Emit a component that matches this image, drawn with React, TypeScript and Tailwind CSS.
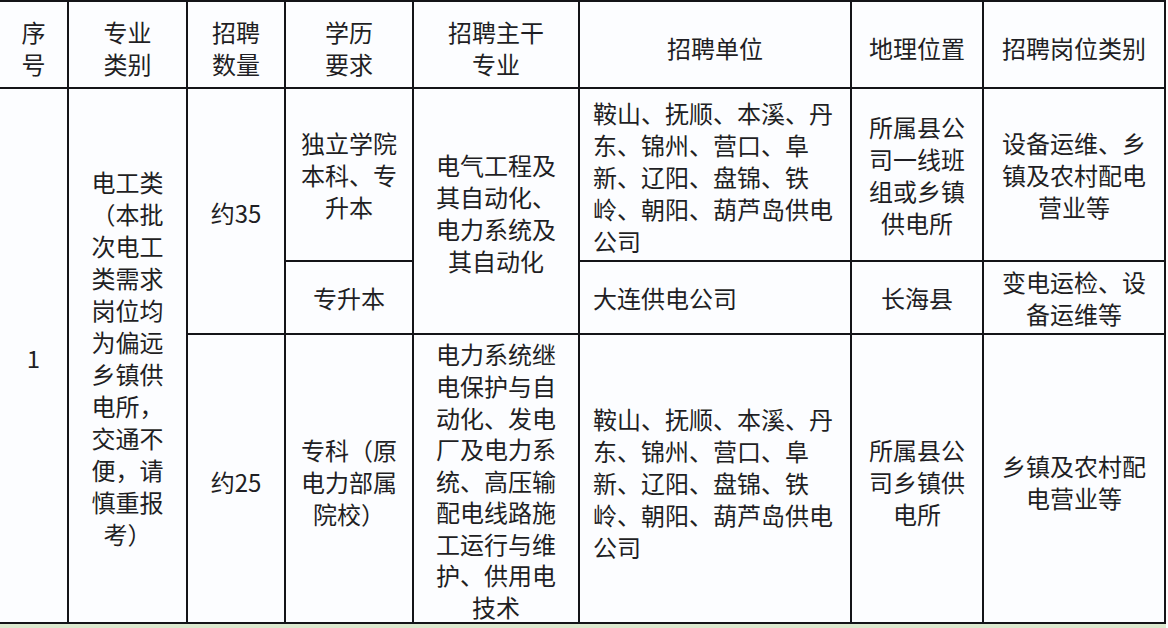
import React from 'react';

type CellProps = {
  lines: string[];
  className?: string;
  align?: 'center' | 'left';
};

// each line is written out, so wrapping matches the scanned table exactly
const Cell = ({ lines, className = '', align = 'center' }: CellProps) => (
  <div
    className={`flex items-center bg-[#fcfdff] ${
      align === 'left' ? 'justify-start pl-[13px] text-left' : 'justify-center text-center'
    } ${className}`}
  >
    <div>
      {lines.map((line, i) => (
        <div key={i} className="whitespace-nowrap">
          {line}
        </div>
      ))}
    </div>
  </div>
);

const units = ['鞍山、抚顺、本溪、丹', '东、锦州、营口、阜', '新、辽阳、盘锦、铁', '岭、朝阳、葫芦岛供电', '公司'];

const App = () => {
  return (
    <div
      className="w-[1168px] h-[628px] overflow-hidden bg-white text-[24px] leading-[32px] text-[#1f1f24]"
      style={{ fontFamily: '"Noto Sans CJK SC", "Noto Sans", sans-serif' }}
    >
      <div className="grid w-[1166px] grid-cols-[67px_117px_96px_126px_164px_270px_130px_180px] grid-rows-[85px_171px_71px_287px] gap-[2px] border-t-2 border-r-2 border-b-2 border-[#141418] bg-[#141418]">
        {/* header */}
        <Cell className="pt-[6px]" lines={['序', '号']} />
        <Cell className="pt-[6px]" lines={['专业', '类别']} />
        <Cell className="pt-[6px]" lines={['招聘', '数量']} />
        <Cell className="pt-[6px]" lines={['学历', '要求']} />
        <Cell className="pt-[6px]" lines={['招聘主干', '专业']} />
        <Cell className="pt-[6px]" lines={['招聘单位']} />
        <Cell className="pt-[6px]" lines={['地理位置']} />
        <Cell className="pt-[6px]" lines={['招聘岗位类别']} />

        {/* row 1, spanning sub rows */}
        <Cell className="col-start-1 row-start-2 row-span-3 pt-[5px]" lines={['1']} />
        <Cell
          className="col-start-2 row-start-2 row-span-3 pt-[4px]"
          lines={['电工类', '（本批', '次电工', '类需求', '岗位均', '为偏远', '乡镇供', '电所，', '交通不', '便，请', '慎重报', '考）']}
        />
        <Cell className="col-start-3 row-start-2 row-span-2 pt-[3px]" lines={['约35']} />
        <Cell className="col-start-4 row-start-2" lines={['独立学院', '本科、专', '升本']} />
        <Cell
          className="col-start-5 row-start-2 row-span-2 pt-[4px]"
          lines={['电气工程及', '其自动化、', '电力系统及', '其自动化']}
        />
        <Cell className="col-start-6 row-start-2 pt-[4px]" align="left" lines={units} />
        <Cell className="col-start-7 row-start-2" lines={['所属县公', '司一线班', '组或乡镇', '供电所']} />
        <Cell className="col-start-8 row-start-2" lines={['设备运维、乡', '镇及农村配电', '营业等']} />

        {/* 大连 */}
        <Cell className="col-start-4 row-start-3" lines={['专升本']} />
        <Cell className="col-start-6 row-start-3" align="left" lines={['大连供电公司']} />
        <Cell className="col-start-7 row-start-3" lines={['长海县']} />
        <Cell className="col-start-8 row-start-3" lines={['变电运检、设', '备运维等']} />

        {/* 专科 */}
        <Cell className="col-start-3 row-start-4 pt-[6px]" lines={['约25']} />
        <Cell className="col-start-4 row-start-4 pt-[6px]" lines={['专科（原', '电力部属', '院校）']} />
        <Cell
          className="col-start-5 row-start-4 pt-[4px] leading-[31.6px]"
          lines={['电力系统继', '电保护与自', '动化、发电', '厂及电力系', '统、高压输', '配电线路施', '工运行与维', '护、供用电', '技术']}
        />
        <Cell className="col-start-6 row-start-4 pt-[8px]" align="left" lines={units} />
        <Cell className="col-start-7 row-start-4 pt-[6px]" lines={['所属县公', '司乡镇供', '电所']} />
        <Cell className="col-start-8 row-start-4 pt-[6px]" lines={['乡镇及农村配', '电营业等']} />
      </div>
      <div className="h-[4px] w-[1166px] bg-[#dce9cf]" />
    </div>
  );
};

export default App;
